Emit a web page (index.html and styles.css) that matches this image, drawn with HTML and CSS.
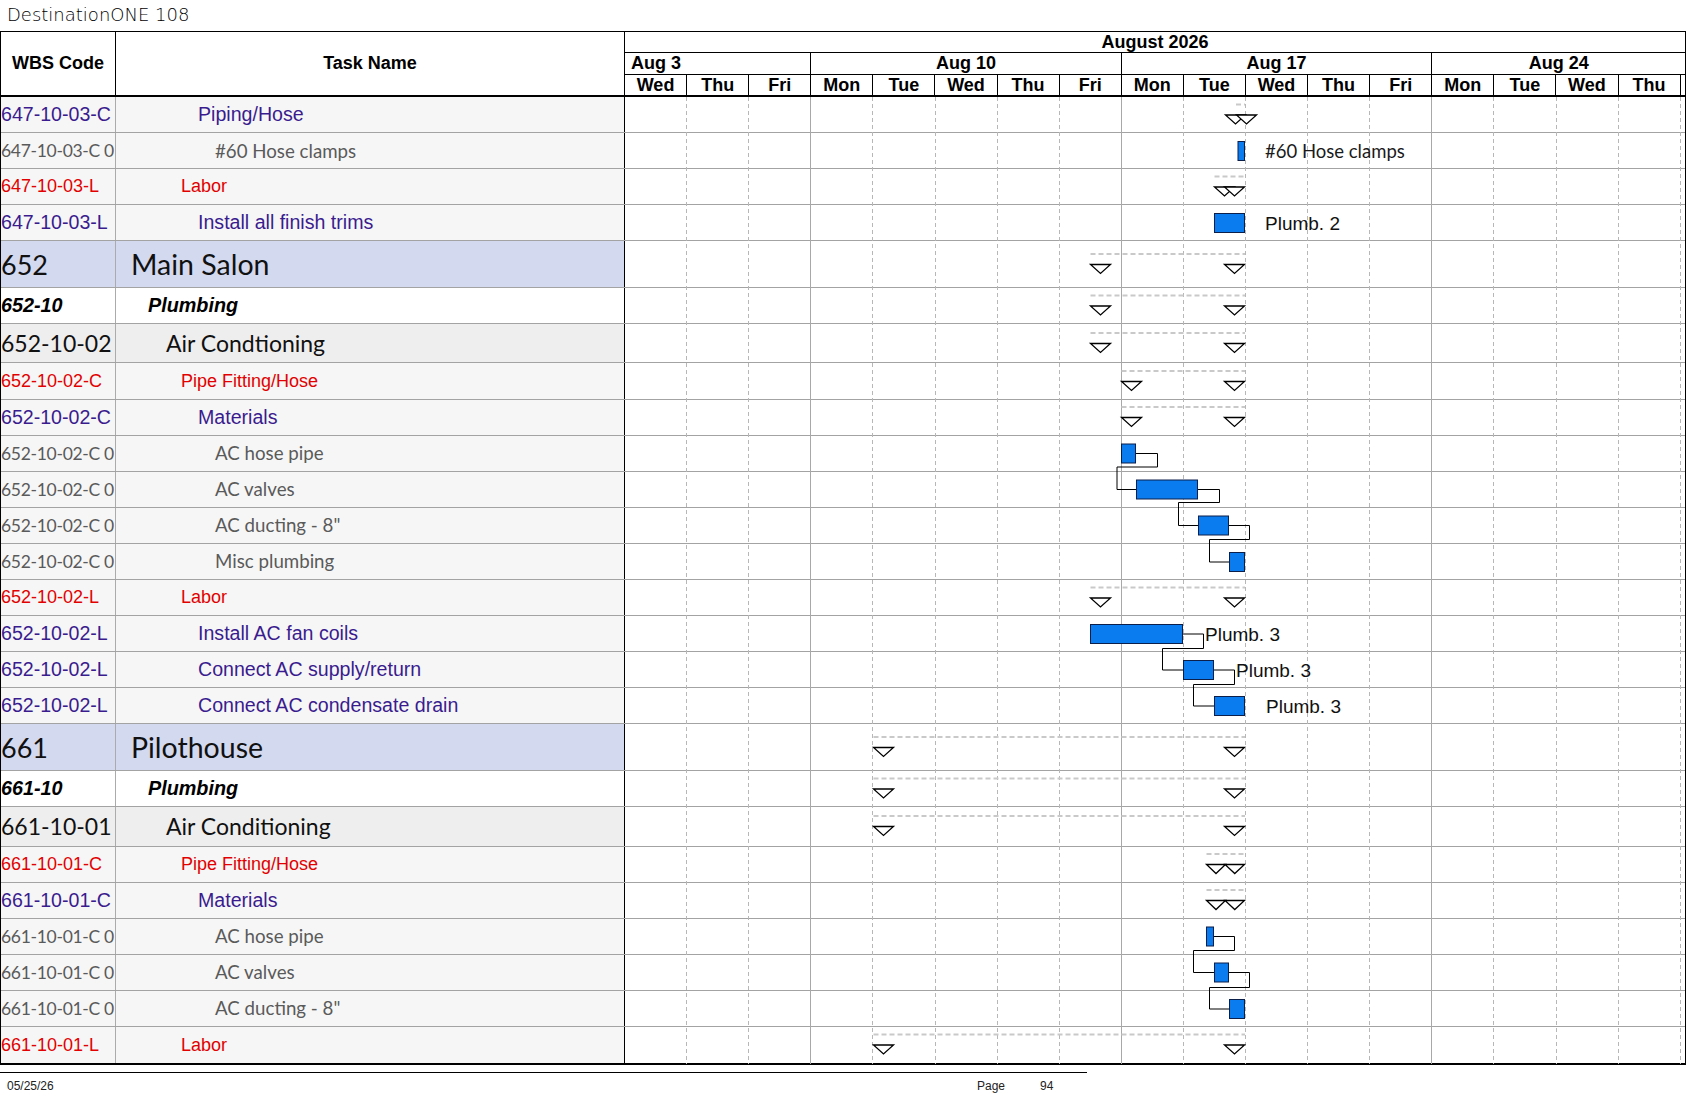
FILE: index.html
```html
<!DOCTYPE html>
<html>
<head>
<meta charset="utf-8">
<title>DestinationONE 108</title>
<link rel="stylesheet" href="styles.css">
</head>
<body>
<div class="sheet">
  <div class="title">DestinationONE 108</div>
  <div class="table">
    <div class="head">
      <div class="h-wbs">WBS Code</div>
      <div class="h-task">Task Name</div>
      <div class="h-time">
        <div class="h-month">August 2026</div>
        <div class="h-weeks">
          <div class="wk first">Aug 3</div>
          <div class="wk">Aug 10</div>
          <div class="wk">Aug 17</div>
          <div class="wk last">Aug 24</div>
        </div>
        <div class="h-days">
          <div class="dy">Wed</div><div class="dy">Thu</div><div class="dy">Fri</div>
          <div class="dy">Mon</div><div class="dy">Tue</div><div class="dy">Wed</div><div class="dy">Thu</div><div class="dy">Fri</div>
          <div class="dy">Mon</div><div class="dy">Tue</div><div class="dy">Wed</div><div class="dy">Thu</div><div class="dy">Fri</div>
          <div class="dy">Mon</div><div class="dy">Tue</div><div class="dy">Wed</div><div class="dy">Thu</div><div class="dy stub"></div>
        </div>
      </div>
    </div>
    <div class="body">
      <div class="row pur"><div class="wbs">647-10-03-C</div><div class="task">Piping/Hose</div><div class="chart"></div></div>
      <div class="row itm"><div class="wbs">647-10-03-C 0</div><div class="task">#60 Hose clamps</div><div class="chart"></div></div>
      <div class="row red"><div class="wbs">647-10-03-L</div><div class="task">Labor</div><div class="chart"></div></div>
      <div class="row pur"><div class="wbs">647-10-03-L</div><div class="task">Install all finish trims</div><div class="chart"></div></div>
      <div class="row sec"><div class="wbs">652</div><div class="task">Main Salon</div><div class="chart"></div></div>
      <div class="row plb"><div class="wbs">652-10</div><div class="task">Plumbing</div><div class="chart"></div></div>
      <div class="row sys"><div class="wbs">652-10-02</div><div class="task">Air Condtioning</div><div class="chart"></div></div>
      <div class="row red"><div class="wbs">652-10-02-C</div><div class="task">Pipe Fitting/Hose</div><div class="chart"></div></div>
      <div class="row pur"><div class="wbs">652-10-02-C</div><div class="task">Materials</div><div class="chart"></div></div>
      <div class="row itm"><div class="wbs">652-10-02-C 0</div><div class="task">AC hose pipe</div><div class="chart"></div></div>
      <div class="row itm"><div class="wbs">652-10-02-C 0</div><div class="task">AC valves</div><div class="chart"></div></div>
      <div class="row itm"><div class="wbs">652-10-02-C 0</div><div class="task">AC ducting - 8"</div><div class="chart"></div></div>
      <div class="row itm"><div class="wbs">652-10-02-C 0</div><div class="task">Misc plumbing</div><div class="chart"></div></div>
      <div class="row red"><div class="wbs">652-10-02-L</div><div class="task">Labor</div><div class="chart"></div></div>
      <div class="row pur"><div class="wbs">652-10-02-L</div><div class="task">Install AC fan coils</div><div class="chart"></div></div>
      <div class="row pur"><div class="wbs">652-10-02-L</div><div class="task">Connect AC supply/return</div><div class="chart"></div></div>
      <div class="row pur"><div class="wbs">652-10-02-L</div><div class="task">Connect AC condensate drain</div><div class="chart"></div></div>
      <div class="row sec"><div class="wbs">661</div><div class="task">Pilothouse</div><div class="chart"></div></div>
      <div class="row plb"><div class="wbs">661-10</div><div class="task">Plumbing</div><div class="chart"></div></div>
      <div class="row sys"><div class="wbs">661-10-01</div><div class="task">Air Conditioning</div><div class="chart"></div></div>
      <div class="row red"><div class="wbs">661-10-01-C</div><div class="task">Pipe Fitting/Hose</div><div class="chart"></div></div>
      <div class="row pur"><div class="wbs">661-10-01-C</div><div class="task">Materials</div><div class="chart"></div></div>
      <div class="row itm"><div class="wbs">661-10-01-C 0</div><div class="task">AC hose pipe</div><div class="chart"></div></div>
      <div class="row itm"><div class="wbs">661-10-01-C 0</div><div class="task">AC valves</div><div class="chart"></div></div>
      <div class="row itm"><div class="wbs">661-10-01-C 0</div><div class="task">AC ducting - 8"</div><div class="chart"></div></div>
      <div class="row red"><div class="wbs">661-10-01-L</div><div class="task">Labor</div><div class="chart"></div></div>

      <svg class="gantt" width="1060" height="967" xmlns="http://www.w3.org/2000/svg">
        <g transform="translate(-625 -97)">
          <g class="grid-day">
            <line x1="686.5" y1="97" x2="686.5" y2="1064"/>
            <line x1="748.5" y1="97" x2="748.5" y2="1064"/>
            <line x1="872.5" y1="97" x2="872.5" y2="1064"/>
            <line x1="935.5" y1="97" x2="935.5" y2="1064"/>
            <line x1="997.5" y1="97" x2="997.5" y2="1064"/>
            <line x1="1059.5" y1="97" x2="1059.5" y2="1064"/>
            <line x1="1183.5" y1="97" x2="1183.5" y2="1064"/>
            <line x1="1245.5" y1="97" x2="1245.5" y2="1064"/>
            <line x1="1307.5" y1="97" x2="1307.5" y2="1064"/>
            <line x1="1369.5" y1="97" x2="1369.5" y2="1064"/>
            <line x1="1493.5" y1="97" x2="1493.5" y2="1064"/>
            <line x1="1556.5" y1="97" x2="1556.5" y2="1064"/>
            <line x1="1618.5" y1="97" x2="1618.5" y2="1064"/>
            <line x1="1680.5" y1="97" x2="1680.5" y2="1064"/>
          </g>
          <g class="grid-week">
            <line x1="810.5" y1="97" x2="810.5" y2="1064"/>
            <line x1="1121.5" y1="97" x2="1121.5" y2="1064"/>
            <line x1="1431.5" y1="97" x2="1431.5" y2="1064"/>
          </g>

          <g class="sumline">
            <line x1="1236" y1="104.5" x2="1245" y2="104.5"/>
            <line x1="1214.5" y1="176.5" x2="1245" y2="176.5"/>
            <line x1="1090.5" y1="254" x2="1245" y2="254"/>
            <line x1="1090.5" y1="295.5" x2="1245" y2="295.5"/>
            <line x1="1090.5" y1="333" x2="1245" y2="333"/>
            <line x1="1121.5" y1="371" x2="1245" y2="371"/>
            <line x1="1121.5" y1="407" x2="1245" y2="407"/>
            <line x1="1090.5" y1="587.5" x2="1245" y2="587.5"/>
            <line x1="873.5" y1="737" x2="1245" y2="737"/>
            <line x1="873.5" y1="778.5" x2="1245" y2="778.5"/>
            <line x1="873.5" y1="816" x2="1245" y2="816"/>
            <line x1="1206.5" y1="854" x2="1245" y2="854"/>
            <line x1="1206.5" y1="890" x2="1245" y2="890"/>
            <line x1="873.5" y1="1034.5" x2="1245" y2="1034.5"/>
          </g>

          <g class="link">
            <path d="M1135.5 453.5 H1157.5 V467 H1117 V489.5 H1136.5"/>
            <path d="M1197.5 489.5 H1219.5 V502.5 H1178.5 V525.5 H1198.5"/>
            <path d="M1228.5 525.5 H1249.5 V539.5 H1209.5 V562 H1229.5"/>
            <path d="M1182.5 634 H1203.5 V648.5 H1162.5 V670 H1183.5"/>
            <path d="M1213.5 670 H1234.5 V684.5 H1193.5 V706 H1214.5"/>
            <path d="M1213.5 936.5 H1234.5 V950.5 H1193.5 V972.5 H1214.5"/>
            <path d="M1228.5 972.5 H1249.5 V987.5 H1209.5 V1009 H1229.5"/>
          </g>

          <g class="tri">
            <path d="M1225.5 115 h20 l-10 9 z"/>
            <path d="M1236.5 115 h20 l-10 9 z"/>
            <path d="M1214.5 187 h20 l-10 9 z"/>
            <path d="M1224.5 187 h20 l-10 9 z"/>
            <path d="M1090.5 264.5 h20 l-10 9 z"/>
            <path d="M1224.5 264.5 h20 l-10 9 z"/>
            <path d="M1090.5 306 h20 l-10 9 z"/>
            <path d="M1224.5 306 h20 l-10 9 z"/>
            <path d="M1090.5 343.5 h20 l-10 9 z"/>
            <path d="M1224.5 343.5 h20 l-10 9 z"/>
            <path d="M1121.5 381.5 h20 l-10 9 z"/>
            <path d="M1224.5 381.5 h20 l-10 9 z"/>
            <path d="M1121.5 417.5 h20 l-10 9 z"/>
            <path d="M1224.5 417.5 h20 l-10 9 z"/>
            <path d="M1090.5 598 h20 l-10 9 z"/>
            <path d="M1224.5 598 h20 l-10 9 z"/>
            <path d="M873.5 747.5 h20 l-10 9 z"/>
            <path d="M1224.5 747.5 h20 l-10 9 z"/>
            <path d="M873.5 789 h20 l-10 9 z"/>
            <path d="M1224.5 789 h20 l-10 9 z"/>
            <path d="M873.5 826.5 h20 l-10 9 z"/>
            <path d="M1224.5 826.5 h20 l-10 9 z"/>
            <path d="M1206.5 864.5 h19 l-9.5 9 z"/>
            <path d="M1225 864.5 h19.5 l-9.75 9 z"/>
            <path d="M1206.5 900.5 h19 l-9.5 9 z"/>
            <path d="M1225 900.5 h19.5 l-9.75 9 z"/>
            <path d="M873.5 1045 h20 l-10 9 z"/>
            <path d="M1224.5 1045 h20 l-10 9 z"/>
          </g>

          <g class="bar">
            <rect x="1238" y="141.5" width="6.5" height="19"/>
            <rect x="1214.5" y="213.5" width="30" height="19"/>
            <rect x="1121.5" y="444" width="14" height="19"/>
            <rect x="1136.5" y="480" width="61" height="19"/>
            <rect x="1198.5" y="516" width="30" height="19"/>
            <rect x="1229.5" y="552.5" width="15" height="19"/>
            <rect x="1090.5" y="624.5" width="92" height="19"/>
            <rect x="1183.5" y="660.5" width="30" height="19"/>
            <rect x="1214.5" y="696.5" width="30" height="19"/>
            <rect x="1206.5" y="927" width="7" height="19"/>
            <rect x="1214.5" y="963" width="14" height="19"/>
            <rect x="1229.5" y="999.5" width="15" height="19"/>
          </g>

          <text class="lbl-c" x="1265" y="151">#60 Hose clamps</text>
          <text class="lbl" x="1265" y="223">Plumb. 2</text>
          <text class="lbl" x="1205" y="634">Plumb. 3</text>
          <text class="lbl" x="1236" y="670">Plumb. 3</text>
          <text class="lbl" x="1266" y="706">Plumb. 3</text>
        </g>
      </svg>
    </div>
  </div>
  <div class="footer">
    <div class="f-date">05/25/26</div>
    <div class="f-page">Page</div>
    <div class="f-num">94</div>
  </div>
</div>
</body>
</html>
```

FILE: styles.css
```css
html, body {
  margin: 0;
  padding: 0;
  background: #fff;
}

body {
  width: 1687px;
  height: 1097px;
  overflow: hidden;
  font-family: "Liberation Sans", Arial, sans-serif;
  color: #000;
}

.sheet {
  width: 1687px;
}

.title {
  height: 31px;
  box-sizing: border-box;
  padding-left: 7px;
  font-family: "DejaVu Sans", sans-serif;
  font-weight: 200;
  font-size: 18px;
  line-height: 29px;
  color: #000;
  white-space: nowrap;
}

.table {
  width: 1686px;
  box-sizing: border-box;
  border: 1px solid #000;
  border-bottom-width: 2px;
}

/* ---------- header ---------- */
.head {
  display: grid;
  grid-template-columns: 115px 509px 1fr;
  height: 65px;
  box-sizing: border-box;
  border-bottom: 2px solid #000;
  font-weight: bold;
  font-size: 18px;
}

.h-wbs,
.h-task {
  display: flex;
  align-items: center;
  justify-content: center;
  border-right: 1px solid #000;
}

.h-time {
  display: flex;
  flex-direction: column;
}

.h-month {
  height: 21px;
  box-sizing: border-box;
  border-bottom: 1px solid #000;
  text-align: center;
  line-height: 20px;
}

.h-weeks {
  height: 22px;
  box-sizing: border-box;
  border-bottom: 1px solid #000;
  display: grid;
  grid-template-columns: 186.3px 310.5px 310.5px 1fr;
}

.wk {
  border-right: 1px solid #000;
  text-align: center;
  line-height: 21px;
  white-space: nowrap;
  overflow: hidden;
}

.wk.first {
  text-align: left;
  padding-left: 6px;
}

.wk.last {
  border-right: none;
}

.h-days {
  height: 20px;
  display: grid;
  grid-template-columns: repeat(17, 62.1px) 1fr;
}

.dy {
  border-right: 1px solid #000;
  text-align: center;
  line-height: 20px;
  white-space: nowrap;
  overflow: hidden;
}

.dy.stub {
  border-right: none;
}

/* ---------- body rows ---------- */
.body {
  position: relative;
}

.row {
  display: grid;
  grid-template-columns: 115px 509px 1fr;
  height: 36.1px;
  box-sizing: border-box;
  border-bottom: 1px solid #a3a3a3;
  background: #f6f6f6;
}

.row:last-of-type {
  border-bottom: none;
}

.wbs,
.task {
  display: flex;
  align-items: center;
  white-space: nowrap;
  overflow: hidden;
}

.wbs {
  border-right: 1px solid #ababab;
}

.task {
  border-right: 1px solid #000;
}

.chart {
  background: #fff;
}

.sec {
  height: 46.5px;
  background: #d3d9ef;
  font-family: Lato, "Liberation Sans", sans-serif;
  font-size: 27px;
  color: #111;
}
.sec .task { padding-left: 15px; font-size: 28.5px; }

.plb {
  background: #fff;
  font-weight: bold;
  font-style: italic;
  font-size: 19.8px;
  color: #000;
}
.plb .task { padding-left: 32px; }

.sys {
  height: 39.5px;
  background: #eeeeee;
  font-family: Lato, "Liberation Sans", sans-serif;
  font-size: 23px;
  color: #111;
}
.sys .task { padding-left: 50px; }

.red {
  font-size: 18px;
  color: #e20000;
}
.red .task { padding-left: 65px; }

.pur {
  font-size: 19.6px;
  color: #3a1c8f;
}
.pur .task { padding-left: 82px; }

.itm {
  font-family: Lato, "Liberation Sans", sans-serif;
  font-size: 18.7px;
  color: #5a5a5a;
}
.itm .wbs { font-size: 17.5px; letter-spacing: -0.3px; }
.itm .task { padding-left: 99px; }

/* ---------- gantt canvas ---------- */
.gantt {
  position: absolute;
  left: 624px;
  top: 0;
  pointer-events: none;
}

.grid-day line {
  stroke: #b7b7b7;
  stroke-width: 1;
  stroke-dasharray: 4 3;
}

.grid-week line {
  stroke: #a8a8a8;
  stroke-width: 1;
}

.sumline line {
  stroke: #c9c9c9;
  stroke-width: 2;
  stroke-dasharray: 5 3;
}

.link path {
  fill: none;
  stroke: #000;
  stroke-width: 1;
}

.tri path {
  fill: #fff;
  stroke: #000;
  stroke-width: 1.3;
  stroke-linejoin: miter;
}

.bar rect {
  fill: #0a7cf0;
  stroke: #0c1f4a;
  stroke-width: 1;
}

.lbl {
  font-family: "Liberation Sans", Arial, sans-serif;
  font-size: 19px;
  fill: #111;
  dominant-baseline: central;
}

.lbl-c {
  font-family: Lato, "Liberation Sans", sans-serif;
  font-size: 18.5px;
  fill: #1a1a1a;
  dominant-baseline: central;
}

/* ---------- footer ---------- */
.footer {
  width: 1087px;
  margin-top: 7px;
  border-top: 1px solid #000;
  display: grid;
  grid-template-columns: 970px 63px 1fr;
  padding-left: 7px;
  padding-top: 7px;
  box-sizing: border-box;
  font-family: "Liberation Sans Narrow", "Liberation Sans", sans-serif;
  font-size: 12px;
  line-height: 13px;
  color: #222;
}
```
